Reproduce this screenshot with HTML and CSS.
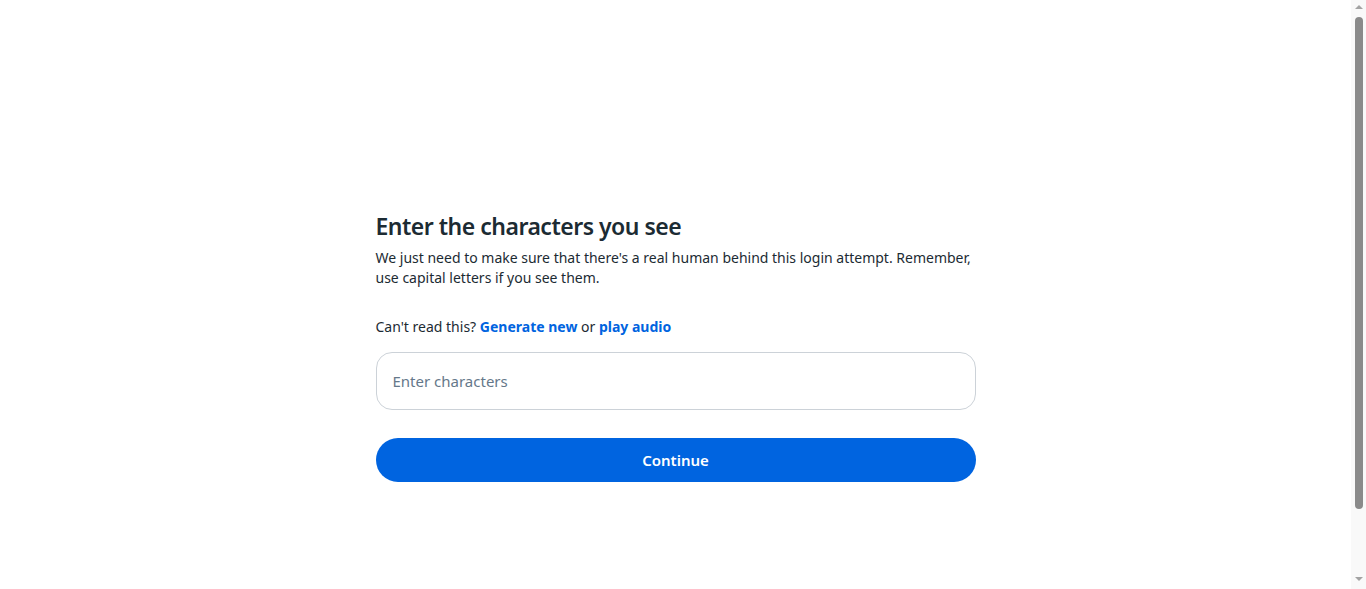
FILE: index.html
```html
<!DOCTYPE html>
<html lang="en">
<head>
<meta charset="utf-8">
<title>Enter the characters you see</title>
<link rel="stylesheet" href="styles.css">
</head>
<body>
<main class="page">
  <section class="card">
    <h1 class="title">Enter the characters you see</h1>
    <p class="desc">We just need to make sure that there's a real human behind this login attempt. Remember, use capital letters if you see them.</p>
    <p class="help">Can't read this? <a class="link" href="#">Generate new</a> or <a class="link" href="#">play audio</a></p>
    <form class="form">
      <input class="field" type="text" placeholder="Enter characters">
      <button class="btn" type="button">Continue</button>
    </form>
  </section>
</main>
<div class="scrollbar" aria-hidden="true">
  <span class="arrow arrow-up"></span>
  <span class="thumb"></span>
  <span class="arrow arrow-down"></span>
</div>
</body>
</html>
```

FILE: styles.css
```css
html, body {
  margin: 0;
  padding: 0;
  background: #ffffff;
  overflow: hidden;
}

body {
  font-family: "Noto Sans", "Open Sans", Arial, sans-serif;
  color: #1c2b33;
}

.page {
  height: 100vh;
  display: flex;
  justify-content: center;
  box-sizing: border-box;
  padding-top: 210px;
  padding-right: 15px;
}

.card {
  width: 600px;
}

.title {
  margin: 0;
  font-size: 23px;
  line-height: 32px;
  font-weight: 600;
  letter-spacing: -0.5px;
}

.desc {
  margin: 6px 0 0;
  font-size: 14px;
  line-height: 20px;
}

.help {
  margin: 29px 0 0;
  font-size: 14px;
  line-height: 20px;
}

.link {
  color: #0064e0;
  font-weight: 700;
  text-decoration: none;
}

.form {
  display: flex;
  flex-direction: column;
  margin-top: 15px;
  gap: 28px;
}

.field {
  box-sizing: border-box;
  height: 58px;
  width: 100%;
  padding: 0 16px;
  border: 1px solid #ccd2d8;
  border-radius: 16px;
  font-family: inherit;
  font-size: 15px;
  color: #1c2b33;
  outline: none;
}

.field::placeholder {
  color: #65788a;
}

.btn {
  height: 44px;
  width: 100%;
  border: none;
  border-radius: 22px;
  background: #0064e0;
  color: #ffffff;
  font-family: inherit;
  font-size: 15px;
  font-weight: 600;
  cursor: pointer;
}

/* imitation of the browser's scrollbar seen in the capture */
.scrollbar {
  position: fixed;
  top: 0;
  right: 0;
  width: 15px;
  height: 100vh;
  background: #f9f9f9;
  display: flex;
  flex-direction: column;
  align-items: center;
}

.arrow {
  width: 0;
  height: 0;
  border-left: 4px solid transparent;
  border-right: 4px solid transparent;
}

.arrow-up {
  margin-top: 5px;
  border-bottom: 4px solid #a3a3a3;
}

.arrow-down {
  margin-top: auto;
  margin-bottom: 8px;
  border-top: 4px solid #a3a3a3;
}

.thumb {
  margin-top: 8px;
  width: 8px;
  height: 492px;
  border-radius: 4px;
  background: #8a8a8a;
}
```
